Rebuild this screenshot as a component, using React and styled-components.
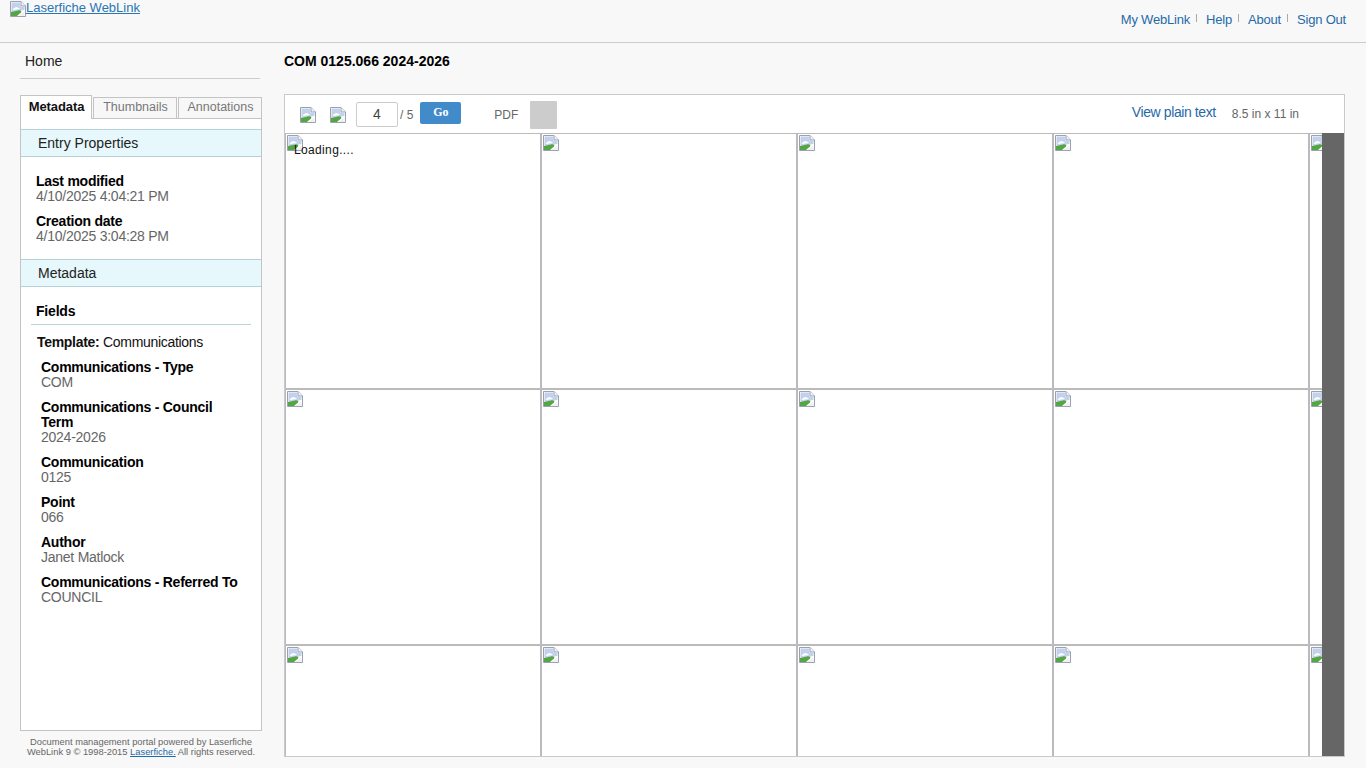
import React from "react";
import styled, { createGlobalStyle } from "styled-components";

const Global = createGlobalStyle`
  html, body { margin: 0; padding: 0; background: #f8f8f8; height: 100%; overflow: hidden; }
  body { font-family: "Liberation Sans", Arial, sans-serif; color: #000; }
  #root { height: 768px; }
`;

const Page = styled.div`
  width: 1366px; height: 768px; display: flex; flex-direction: column; overflow: hidden;
`;
const Header = styled.header`
  height: 42px; flex: none; border-bottom: 1px solid #ccc; display: flex; justify-content: space-between;
  padding: 0 20px 0 10px; box-sizing: content-box;
`;
const LogoLink = styled.a`
  display: flex; align-items: flex-start; height: 16px; font-size: 13px; line-height: 15px; color: #2a76b5; text-decoration: underline;
  svg { margin-top: 1px; }
`;
const Nav = styled.nav`
  display: flex; align-items: center; padding-top: 12px; height: 16px; font-size: 13px; letter-spacing: -0.2px;
`;
const NavLink = styled.a`
  color: #1f6aa8; line-height: 16px;
`;
const NavSep = styled.span`
  width: 1px; height: 8px; background: #aaa; margin: -4px 9px 0 6px;
`;
const Body = styled.div`
  flex: 1; display: flex; min-height: 0; padding: 0 21px 0 20px; gap: 22px;
`;
const Left = styled.aside`
  width: 242px; flex: none; display: flex; flex-direction: column;
`;
const Home = styled.div`
  flex: none; height: 36px; margin-bottom: 18px; padding: 10px 0 0 5px; box-sizing: border-box; width: 240px;
  border-bottom: 1px solid #ccc; font-size: 14px; line-height: 17px; color: #222;
`;
const Tabs = styled.div`
  flex: none; display: flex; height: 22px; align-items: flex-end; position: relative; z-index: 1; margin-bottom: -1px;
`;
const Tab = styled.div`
  box-sizing: border-box; flex: none; width: ${p => p.$w}px; height: ${p => p.$active ? 24 : 22}px; margin-right: ${p => p.$mr || 0}px;
  border: 1px solid #c4c4c4; text-align: center; font-size: 12.5px; line-height: 18px; padding-left: 1px;
  font-weight: ${p => p.$active ? 700 : 400}; color: ${p => p.$active ? "#111" : "#777"};
  background: ${p => p.$active ? "#fff" : "#f7f7f7"};
  ${p => p.$active && "border-bottom: none; line-height: 22px; font-size: 13px; letter-spacing: -0.1px;"}
`;
const Panel = styled.div`
  flex: none; box-sizing: border-box; height: 613px; background: #fff; border: 1px solid #c4c4c4; padding-top: 10px;
`;
const SectionHead = styled.div`
  height: 26px; background: #e6f8fb; border-top: 1px solid #b5d0d6; border-bottom: 1px solid #b5d0d6;
  padding-left: 17px; font-size: 14px; line-height: 26px; color: #222;
`;
const Props = styled.div`
  padding: 17px 15px 15px; display: flex; flex-direction: column; gap: 10px;
`;
const Item = styled.div`
  font-size: 14px; line-height: 15px; letter-spacing: -0.25px;
`;
const Label = styled.div`
  font-weight: 700; color: #000;
`;
const Value = styled.div`
  color: #666;
`;
const FieldsTitle = styled.div`
  margin: 17px 10px 0; padding: 0 0 5px 5px; border-bottom: 1px solid #bcd3d8; font-size: 14px; font-weight: 700; line-height: 15px; letter-spacing: -0.2px;
`;
const TemplateRow = styled.div`
  margin: 10px 0 10px 16px; font-size: 14px; line-height: 15px; color: #111; letter-spacing: -0.3px;
`;
const Bold = styled.b`
  font-weight: 700;
`;
const Fields = styled.div`
  padding: 0 16px 0 20px; display: flex; flex-direction: column; gap: 10px;
`;
const Footer = styled.footer`
  flex: none; height: 30px; padding-top: 6px; font-size: 9.33px; line-height: 10px; text-align: center; color: #666; white-space: nowrap;
`;
const FooterLink = styled.a`
  color: #1f6aa8; text-decoration: underline;
`;
const Right = styled.main`
  flex: 1; min-width: 0; display: flex; flex-direction: column;
`;
const Title = styled.h1`
  margin: 0; height: 51px; padding-top: 10px; box-sizing: border-box; font-size: 14px; line-height: 16px; font-weight: 700; color: #000;
`;
const Viewer = styled.div`
  box-sizing: border-box; width: 1061px; height: 663px; border: 1px solid #c9c9c9; background: #fff; display: flex; flex-direction: column;
`;
const Toolbar = styled.div`
  height: 38px; flex: none; display: flex; align-items: center; padding-left: 15px; font-size: 12px; color: #666;
`;
const ToolIcon = styled.span`
  display: flex; width: 16px; height: 16px; margin: 2px 14px 0 0;
`;
const PageInput = styled.div`
  box-sizing: border-box; width: 42px; height: 25px; border: 1px solid #ccc; border-radius: 2px; text-align: center;
  font-size: 14px; line-height: 22px; color: #444; margin-right: 2px; margin-left: -4px;
`;
const PageCount = styled.span`
  margin: 1px 7px 0 0; line-height: 14px;
`;
const GoButton = styled.button`
  width: 41px; height: 22px; border: none; border-radius: 2px; background: #428bca; color: #fff; padding: 0;
  font-family: "Liberation Serif", serif; font-weight: 700; font-size: 12px; margin: -3px 33px 0 0;
`;
const Pdf = styled.span`
  margin: 1px 12px 0 0;
`;
const GreyBox = styled.span`
  width: 27px; height: 28px; border-radius: 1px; background: #ccc; margin-top: 1px;
`;
const PlainLink = styled.a`
  margin-left: auto; color: #1f6aa8; font-size: 14px; letter-spacing: -0.4px; margin-top: -5px;
`;
const Size = styled.span`
  margin: 0 45px 0 16px;
`;
const Scroller = styled.div`
  flex: 1; min-height: 0; display: flex; overflow: hidden; position: relative;
`;
const Grid = styled.div`
  flex: 1; min-width: 0; overflow: hidden; display: grid; grid-template-columns: repeat(5, 256px); grid-auto-rows: 256px;
`;
const Tile = styled.div`
  box-sizing: border-box; border: 1px solid #bbb; background: #fff; padding: 1px;
`;
const Scrollbar = styled.div`
  width: 22px; flex: none; background: #666;
`;
const Loading = styled.div`
  position: absolute; left: 9px; top: 10px; font-size: 12px; line-height: 14px; color: #111; letter-spacing: 0.35px;
`;

const Broken = () => (
  <svg width="16" height="16" viewBox="0 0 16 16">
    <path d="M0.5 0.5H11L15.5 5V15.5H0.5Z" fill="#fff" stroke="#98a2b0" />
    <path d="M11 0.5V5H15.5" fill="#eef1f6" stroke="#98a2b0" />
    <path d="M1.5 1.5H10.5V5.5H14.5V9L1.5 11Z" fill="#c3d2ec" />
    <path d="M3 8C5 5.5 8 5.5 10 8L3 9Z" fill="#fff" />
    <path d="M1 15V11L8 9.5C10.5 9 12 10 11 11.5L7 15Z" fill="#55a545" />
    <path d="M9 15L14.5 10.5V15Z" fill="#f0f0f0" />
  </svg>
);

const entry = [
  ["Last modified", "4/10/2025 4:04:21 PM"],
  ["Creation date", "4/10/2025 3:04:28 PM"],
];
const fields = [
  ["Communications - Type", "COM"],
  ["Communications - Council Term", "2024-2026"],
  ["Communication", "0125"],
  ["Point", "066"],
  ["Author", "Janet Matlock"],
  ["Communications - Referred To", "COUNCIL"],
];
const links = ["My WebLink", "Help", "About", "Sign Out"];

export default function App() {
  return (
    <Page>
      <Global />
      <Header>
        <LogoLink href="#"><Broken />Laserfiche WebLink</LogoLink>
        <Nav>
          {links.map((l, i) => (
            <React.Fragment key={l}>
              {i > 0 && <NavSep />}
              <NavLink>{l}</NavLink>
            </React.Fragment>
          ))}
        </Nav>
      </Header>
      <Body>
        <Left>
          <Home>Home</Home>
          <Tabs>
            <Tab $active $w={72} $mr={1}>Metadata</Tab>
            <Tab $w={84} $mr={1}>Thumbnails</Tab>
            <Tab $w={84}>Annotations</Tab>
          </Tabs>
          <Panel>
            <SectionHead>Entry Properties</SectionHead>
            <Props>
              {entry.map(([a, b]) => (
                <Item key={a}><Label>{a}</Label><Value>{b}</Value></Item>
              ))}
            </Props>
            <SectionHead>Metadata</SectionHead>
            <FieldsTitle>Fields</FieldsTitle>
            <TemplateRow><Bold>Template:</Bold> Communications</TemplateRow>
            <Fields>
              {fields.map(([a, b]) => (
                <Item key={a}><Label>{a}</Label><Value>{b}</Value></Item>
              ))}
            </Fields>
          </Panel>
          <Footer>
            Document management portal powered by Laserfiche<br />
            WebLink 9 © 1998-2015 <FooterLink>Laserfiche.</FooterLink> All rights reserved.
          </Footer>
        </Left>
        <Right>
          <Title>COM 0125.066 2024-2026</Title>
          <Viewer>
            <Toolbar>
              <ToolIcon><Broken /></ToolIcon>
              <ToolIcon><Broken /></ToolIcon>
              <PageInput>4</PageInput>
              <PageCount>/ 5</PageCount>
              <GoButton>Go</GoButton>
              <Pdf>PDF</Pdf>
              <GreyBox />
              <PlainLink>View plain text</PlainLink>
              <Size>8.5 in x 11 in</Size>
            </Toolbar>
            <Scroller>
              <Grid>
                {Array.from({ length: 15 }, (_, i) => (
                  <Tile key={i}><Broken /></Tile>
                ))}
              </Grid>
              <Scrollbar />
              <Loading>Loading....</Loading>
            </Scroller>
          </Viewer>
        </Right>
      </Body>
    </Page>
  );
}
